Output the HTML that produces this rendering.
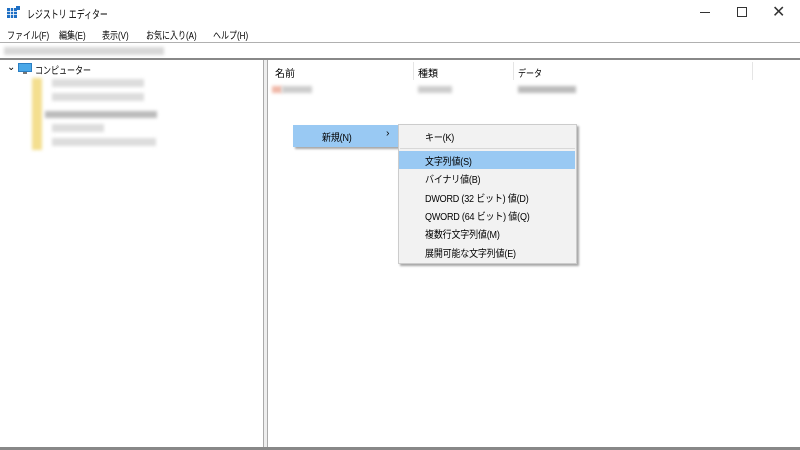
<!DOCTYPE html>
<html><head><meta charset="utf-8"><style>
*{margin:0;padding:0;box-sizing:border-box}
body{width:800px;height:450px;background:#fff;font-family:"Liberation Sans","Noto Sans CJK JP",sans-serif;font-size:11px;color:#000;position:relative;overflow:hidden}
.a{position:absolute}
.t{white-space:nowrap}
.blur{filter:blur(1.5px)}
.m{font-size:10px;letter-spacing:-0.2px;transform:scaleX(0.9);transform-origin:0 0}
.mb{font-size:10px;transform:scaleX(0.8);transform-origin:0 0}
</style></head><body>
<svg class="a" style="left:7px;top:6px" width="14" height="14"><rect x="0" y="2" width="10" height="10" fill="#1e6fc4"/><path d="M0 5.5h10M0 8.5h10M3.5 2v10M6.5 2v10" stroke="#fff" stroke-width="0.8"/><rect x="9" y="0" width="4" height="4" fill="#1e6fc4"/></svg>
<div class="a t" style="left:27px;top:6px;font-size:11px;transform:scaleX(0.72);transform-origin:0 0">レジストリ エディター</div>
<div class="a" style="left:700px;top:12px;width:10px;height:1px;background:#333"></div>
<div class="a" style="left:737px;top:7px;width:10px;height:10px;border:1px solid #333"></div>
<div class="a t" style="left:772px;top:2px;font-size:16px;color:#333">✕</div>
<div class="a t mb" style="left:7px;top:27px">ファイル(F)</div>
<div class="a t mb" style="left:59px;top:27px">編集(E)</div>
<div class="a t mb" style="left:102px;top:27px">表示(V)</div>
<div class="a t mb" style="left:146px;top:27px">お気に入り(A)</div>
<div class="a t mb" style="left:213px;top:27px">ヘルプ(H)</div>
<div class="a" style="left:0;top:42px;width:800px;height:18px;border-top:1px solid #b0b0b0;border-bottom:2px solid #888"></div>
<div class="a blur" style="left:4px;top:47px;width:160px;height:8px;background:#d8d8d8"></div>
<div class="a" style="left:263px;top:60px;width:5px;height:390px;background:#eee;border-left:1px solid #aaa;border-right:1px solid #aaa"></div>
<div class="a" style="left:0;top:447px;width:800px;height:3px;background:#888"></div>
<div class="a t" style="left:7px;top:62px;font-size:10px">⌄</div>
<svg class="a" style="left:18px;top:63px" width="14" height="12"><rect x="0.5" y="0.5" width="13" height="8" fill="#4aa8e8" stroke="#2b7fc4"/><rect x="5" y="9" width="4" height="2" fill="#777"/></svg>
<div class="a t mb" style="left:35px;top:62px">コンピューター</div>
<div class="a blur" style="left:32px;top:78px;width:10px;height:72px;background:#f4df8f"></div>
<div class="a blur" style="left:52px;top:79px;width:92px;height:8px;background:#ddd"></div>
<div class="a blur" style="left:52px;top:93px;width:92px;height:8px;background:#ddd"></div>
<div class="a blur" style="left:45px;top:111px;width:112px;height:7px;background:#bbb"></div>
<div class="a blur" style="left:52px;top:124px;width:52px;height:8px;background:#ddd"></div>
<div class="a blur" style="left:52px;top:138px;width:104px;height:8px;background:#ddd"></div>
<div class="a t" style="left:275px;top:65px;font-size:10px">名前</div>
<div class="a t" style="left:418px;top:65px;font-size:10px">種類</div>
<div class="a t mb" style="left:518px;top:65px">データ</div>
<div class="a" style="left:413px;top:62px;width:1px;height:18px;background:#e5e5e5"></div>
<div class="a" style="left:513px;top:62px;width:1px;height:18px;background:#e5e5e5"></div>
<div class="a" style="left:752px;top:62px;width:1px;height:18px;background:#e5e5e5"></div>
<div class="a blur" style="left:272px;top:86px;width:10px;height:7px;background:#f0b8a8"></div>
<div class="a blur" style="left:282px;top:86px;width:30px;height:7px;background:#ccc"></div>
<div class="a blur" style="left:418px;top:86px;width:34px;height:7px;background:#ccc"></div>
<div class="a blur" style="left:518px;top:86px;width:58px;height:7px;background:#bbb"></div>
<div class="a" style="left:293px;top:125px;width:107px;height:22px;background:#99c9f3;box-shadow:2px 2px 2px rgba(0,0,0,.35)"></div>
<div class="a t m" style="left:322px;top:129px">新規(N)</div>
<div class="a t" style="left:386px;top:127px;font-size:10.5px">›</div>
<div class="a" style="left:398px;top:124px;width:179px;height:140px;background:#f2f2f2;border:1px solid #ccc;box-shadow:2px 2px 2px rgba(0,0,0,.35)"></div>
<div class="a" style="left:400px;top:148px;width:175px;height:1px;background:#d8d8d8"></div>
<div class="a" style="left:399px;top:151px;width:176px;height:18px;background:#99c9f3"></div>
<div class="a t m" style="left:425px;top:129px">キー(K)</div>
<div class="a t m" style="left:425px;top:153px">文字列値(S)</div>
<div class="a t m" style="left:425px;top:171px">バイナリ値(B)</div>
<div class="a t m" style="left:425px;top:190px">DWORD (32 ビット) 値(D)</div>
<div class="a t m" style="left:425px;top:208px">QWORD (64 ビット) 値(Q)</div>
<div class="a t m" style="left:425px;top:226px">複数行文字列値(M)</div>
<div class="a t m" style="left:425px;top:245px">展開可能な文字列値(E)</div>
</body></html>
